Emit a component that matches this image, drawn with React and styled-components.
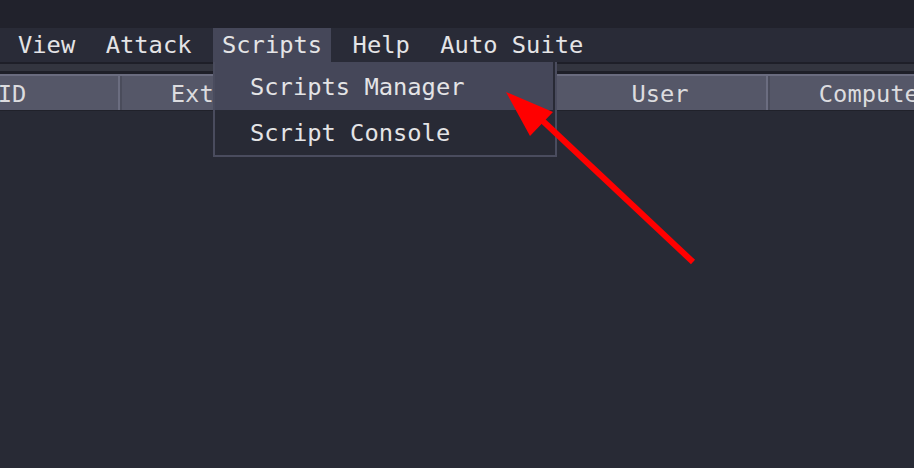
import React from 'react';
import styled, { createGlobalStyle } from 'styled-components';

const GlobalStyle = createGlobalStyle`
    html, body { margin:0; padding:0; background:#282a35; }
    body { font-family:"DejaVu Sans Mono", "Liberation Mono", monospace; }
`

const menus = ['View', 'Attack', 'Scripts', 'Help', 'Auto Suite'];
const columns = ['ID', 'External', 'Internal', 'User', 'Computer'];

function App() {
    return(
        <Wrapper>
            <GlobalStyle/>
            <TopStrip/>
            <MenuBar>
                {menus.map(m => (
                    <MenuItem key={m} $open={m === 'Scripts'}>
                        {m}
                        {m === 'Scripts' && (
                            <Dropdown>
                                <DropItem $active>Scripts Manager</DropItem>
                                <DropItem>Script Console</DropItem>
                            </Dropdown>
                        )}
                    </MenuItem>
                ))}
            </MenuBar>
            <Splitter/>
            <HeaderRow>
                {columns.map(c => <HeaderCell key={c}>{c}</HeaderCell>)}
            </HeaderRow>
            <Body/>
            <Arrow viewBox="0 0 914 468" width="914" height="468">
                <line x1="693" y1="262" x2="528" y2="107" stroke="#ff0000" strokeWidth="6"/>
                <polygon points="506,92 553,112 530,136" fill="#ff0000"/>
            </Arrow>
        </Wrapper>
    )
}
export default App;

const Wrapper = styled.div`
    position:relative;
    display:flex; flex-direction:column;
    width:914px; height:468px;
    overflow:hidden;
    background:#282a35;
`
const TopStrip = styled.div`
    height:28px;
    background:#21222c;
`
const MenuBar = styled.div`
    display:flex; gap:12.5px;
    height:34px;
    padding-left:9px;
    background:#292b37;
    position:relative; z-index:2;
`
const MenuItem = styled.div`
    position:relative;
    padding:0 9px;
    font-size:23.75px; line-height:34px;
    color:#e4e4e6;
    white-space:nowrap;
    background:${p => p.$open ? '#454759' : 'transparent'};
`
const Dropdown = styled.div`
    position:absolute; left:0; top:34px;
    display:flex; flex-direction:column;
    width:340px; height:93px;
    background:#282a35;
    border:2px solid #4a4c5e;
    border-top:none;
`
const DropItem = styled.div`
    height:${p => p.$active ? '48px' : '45px'};
    line-height:${p => p.$active ? '50px' : '47px'};
    margin-right:2px;
    padding-left:35px;
    color:#e4e4e6;
    background:${p => p.$active ? '#454759' : 'transparent'};
`
const Splitter = styled.div`
    height:7px;
    background:#33353f;
    border-top:2px solid #1e1f28;
    border-bottom:3px solid #1e1f28;
`
const HeaderRow = styled.div`
    display:flex;
    margin-left:-96px;
    height:34px;
    border-top:2px solid #6a6c7f;
    background:#555768;
`
const HeaderCell = styled.div`
    flex:0 0 216px;
    box-sizing:border-box;
    border-left:2px solid #4a4c5b;
    border-right:2px solid #6b6d80;
    text-align:center;
    font-size:23.75px; line-height:34px;
    padding-top:1px;
    color:#dcdcdf;
    white-space:nowrap;
`
const Body = styled.div`
    flex:1;
    background:#282a35;
    border-top:1px solid #20212a;
`
const Arrow = styled.svg`
    position:absolute; left:0; top:0;
    z-index:3;
    pointer-events:none;
`
